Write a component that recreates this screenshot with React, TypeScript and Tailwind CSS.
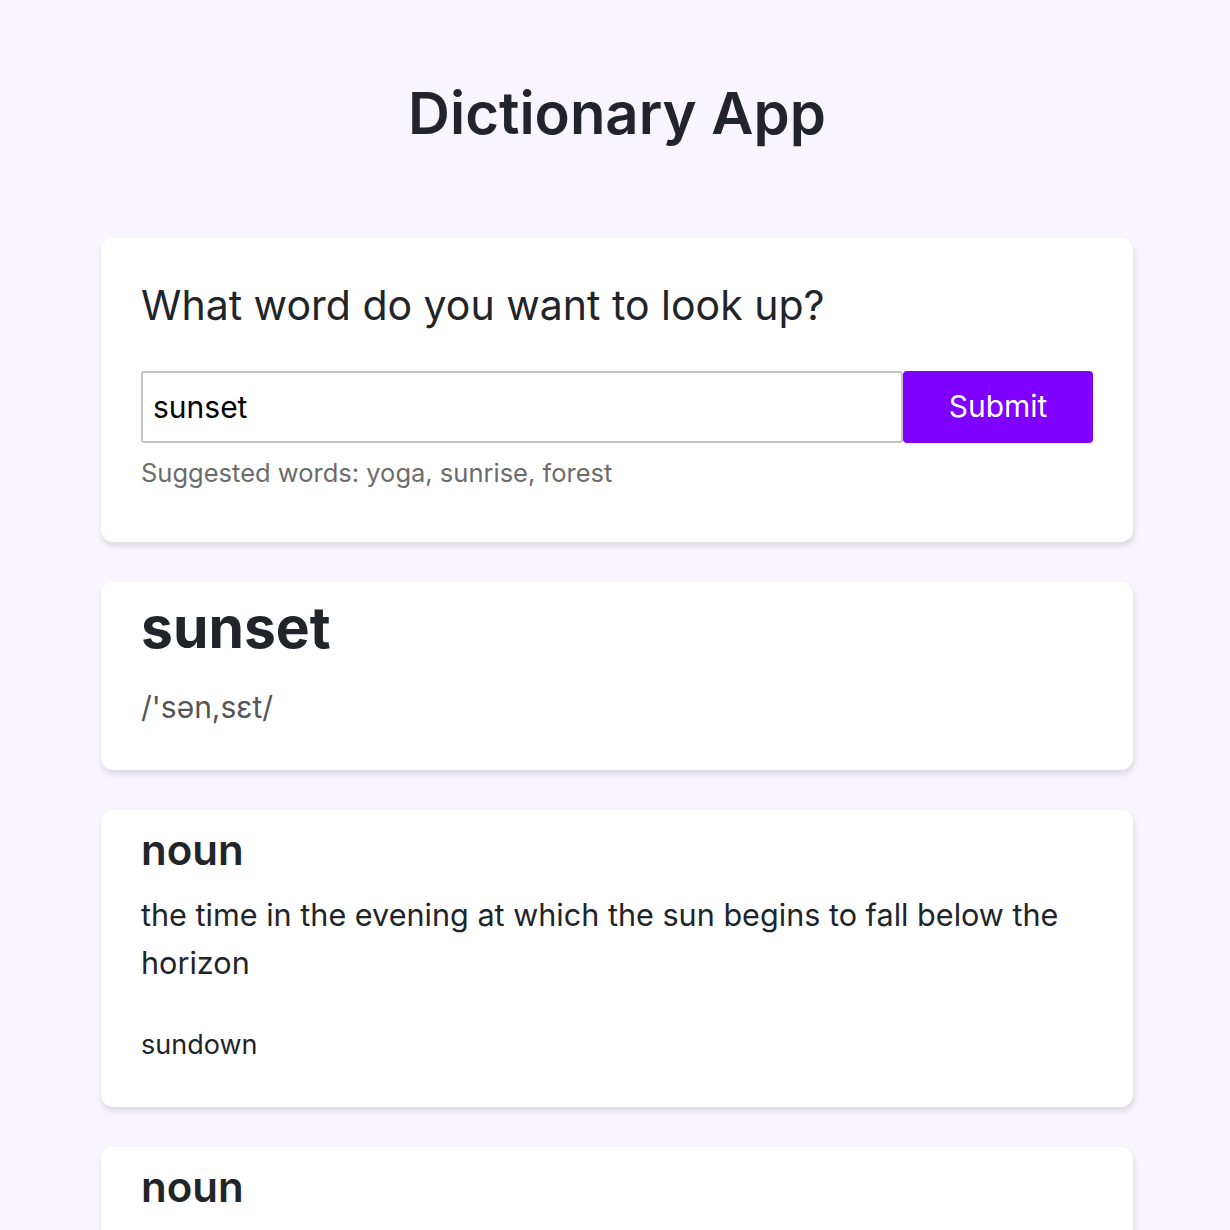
import React from "react";

const definitions = [
  {
    partOfSpeech: "noun",
    definition: "the time in the evening at which the sun begins to fall below the horizon",
    synonym: "sundown",
  },
  {
    partOfSpeech: "noun",
    definition: "the time in the evening at which the sun begins to fall below the horizon",
    synonym: "sundown",
  },
];

export default function App() {
  return (
    <div className="min-h-[1230px] bg-[#f9f5fe] font-['Inter',sans-serif] text-[#212529]">
      <div className="ml-[101px] w-[1032px] pt-[79px]">
        <h1 className="text-center text-[58px] leading-[1.2] font-semibold">Dictionary App</h1>

        <div className="mt-[89px] rounded-xl bg-white px-10 pt-[43px] pb-[50px] shadow-[1px_4px_6px_rgba(0,0,0,0.12)]">
          <h2 className="text-[41px] leading-[1.2] font-normal">What word do you want to look up?</h2>
          <form className="mt-[41px] flex" onSubmit={(e) => e.preventDefault()}>
            <input
              type="search"
              defaultValue="sunset"
              className="h-[72px] flex-1 rounded-[3px] border-2 border-[#c4c4c4] bg-white px-[10px] text-[30px] text-black outline-none"
            />
            <button className="h-[72px] w-[190px] rounded-[4px] bg-[#8000ff] text-[30px] text-white">Submit</button>
          </form>
          <p className="mt-[11px] text-[25.5px] leading-[1.5] text-[#6c6c6c]">Suggested words: yoga, sunrise, forest</p>
        </div>

        <div className="mt-10 rounded-xl bg-white px-10 pt-3 pb-10 shadow-[1px_4px_6px_rgba(0,0,0,0.12)]">
          <h2 className="text-[57px] leading-[1.2] font-bold">sunset</h2>
          <p className="mt-[23px] text-[30px] leading-[1.5] text-[#555]">/'sən,sɛt/</p>
        </div>

        {definitions.map((d, i) => (
          <div key={i} className="mt-10 rounded-xl bg-white px-10 pt-[15px] pb-[42px] shadow-[1px_4px_6px_rgba(0,0,0,0.12)]">
            <h3 className="text-[42px] leading-[1.2] font-semibold">{d.partOfSpeech}</h3>
            <p className="mt-[15px] text-[30.6px] leading-[48px]">{d.definition}</p>
            <p className="mt-[38px] text-[27px] leading-[1.5]">{d.synonym}</p>
          </div>
        ))}
      </div>
    </div>
  );
}
